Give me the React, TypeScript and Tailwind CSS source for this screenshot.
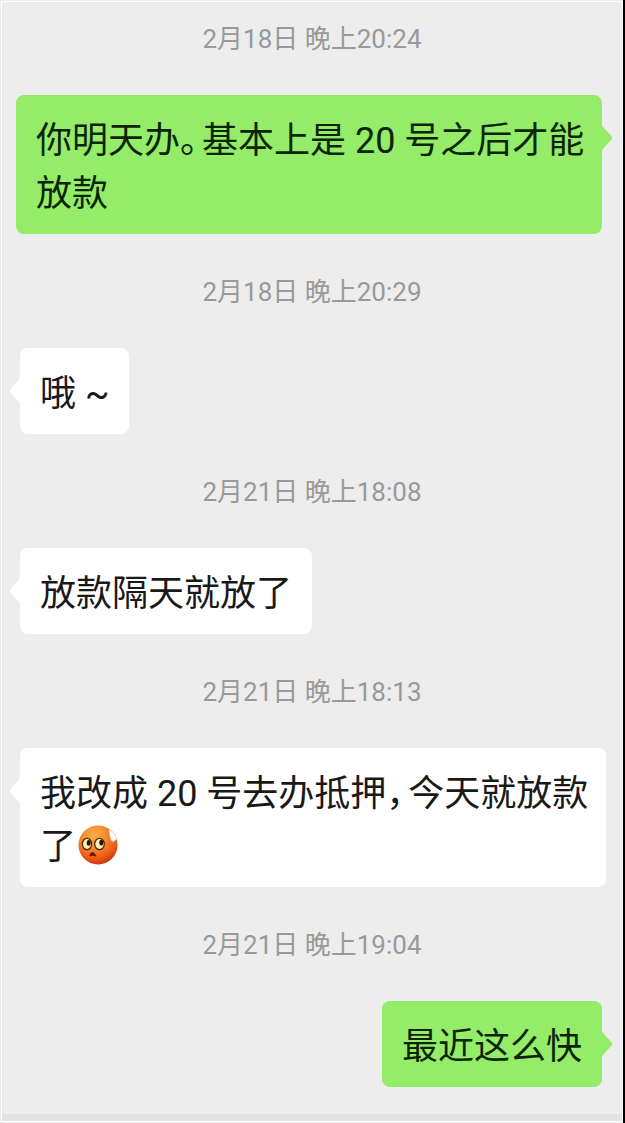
import type { ReactNode } from "react";

type Side = "sent" | "received";

function Time({ children, first = false }: { children: ReactNode; first?: boolean }) {
  return (
    <time
      className={`block pb-[39px] text-center text-[26px] leading-[34px] text-[#999999] ${first ? "pt-5" : "pt-[41px]"}`}
    >
      {children}
    </time>
  );
}

function Tail({ side }: { side: Side }) {
  return side === "sent" ? (
    <svg className="absolute top-[30px] left-full h-[26px] w-[11px] text-[#95ec69]" viewBox="0 0 11 26" aria-hidden="true">
      <path d="M0 0L1 2L9.6 11.2Q11 13 9.6 14.6L1 24L0 26Z" fill="currentColor" />
    </svg>
  ) : (
    <svg className="absolute top-[30px] right-full h-[26px] w-[11px] text-white" viewBox="0 0 11 26" aria-hidden="true">
      <path d="M11 0L10 2L1.4 11.2Q0 13 1.4 14.6L10 24L11 26Z" fill="currentColor" />
    </svg>
  );
}

function Message({ side, long = false, children }: { side: Side; long?: boolean; children: ReactNode }) {
  const sent = side === "sent";
  return (
    <div className={`flex ${sent ? "justify-end pl-3.5 pr-5" : "justify-start pl-[18px] pr-4"}`}>
      <div
        className={`relative rounded-lg pt-5 pb-[13px] pl-5 text-[36px] leading-[53px] ${long ? "pr-4" : "pr-5"} ${
          sent ? "bg-[#95ec69] text-[#0b2504]" : "bg-white text-[#191919]"
        }`}
      >
        <Tail side={side} />
        <p>{children}</p>
      </div>
    </div>
  );
}

function Punct({ children }: { children: ReactNode }) {
  return <span className="mr-1 [font-feature-settings:'halt']">{children}</span>;
}

function Flushed() {
  return (
    <svg className="mx-0.5 inline-block size-10 align-[-6px]" viewBox="0 0 40 40" role="img" aria-label="翻白眼">
      <defs>
        <radialGradient id="face" cx="0.4" cy="0.25" r="0.8">
          <stop offset="0" stopColor="#f9b04a" />
          <stop offset="0.4" stopColor="#f48a2c" />
          <stop offset="0.75" stopColor="#ee5a18" />
          <stop offset="1" stopColor="#c22a10" />
        </radialGradient>
      </defs>
      <circle cx="20" cy="20" r="19.5" fill="url(#face)" />
      <path d="M31 4.5Q38 8 38.5 14Q36.5 17.5 33.5 16Q31.5 12 31 4.5Z" fill="#fff" stroke="#e8b8a0" strokeWidth="0.7" />
      <ellipse cx="9" cy="19" rx="4.6" ry="5.7" fill="#fff0b8" stroke="#5a2608" strokeWidth="1.3" />
      <ellipse cx="21.5" cy="19" rx="4.8" ry="5.7" fill="#fff0b8" stroke="#5a2608" strokeWidth="1.3" />
      <ellipse cx="10.7" cy="17.8" rx="2" ry="2.9" fill="#2a1608" />
      <ellipse cx="23.3" cy="17.6" rx="2" ry="2.9" fill="#2a1608" />
      <path d="M11.7 31Q12.5 27.5 14.5 27.5Q16.8 28 18 31Q15 29.8 11.7 31Z" fill="#6d1206" stroke="#6d1206" strokeWidth="0.8" />
    </svg>
  );
}

export default function App() {
  return (
    <main className="min-h-screen border-r-2 border-black bg-[#ededed] pt-px pl-px font-['Roboto','Noto_Sans_CJK_SC',sans-serif]">
      <div className="border-t border-r border-l border-white" lang="zh-CN">
        <section className="pb-[27px]">
          <Time first>2月18日 晚上20:24</Time>
          <Message side="sent" long>
            你明天办<Punct>。</Punct>基本上是 20 号之后才能放款
          </Message>
          <Time>2月18日 晚上20:29</Time>
          <Message side="received">哦 ~</Message>
          <Time>2月21日 晚上18:08</Time>
          <Message side="received">放款隔天就放了</Message>
          <Time>2月21日 晚上18:13</Time>
          <Message side="received" long>
            我改成 20 号去办抵押<Punct>，</Punct>今天就放款了
            <Flushed />
          </Message>
          <Time>2月21日 晚上19:04</Time>
          <Message side="sent">最近这么快</Message>
        </section>
        <footer className="h-2 border-b border-white bg-[#e3e3e3]" />
      </div>
    </main>
  );
}
